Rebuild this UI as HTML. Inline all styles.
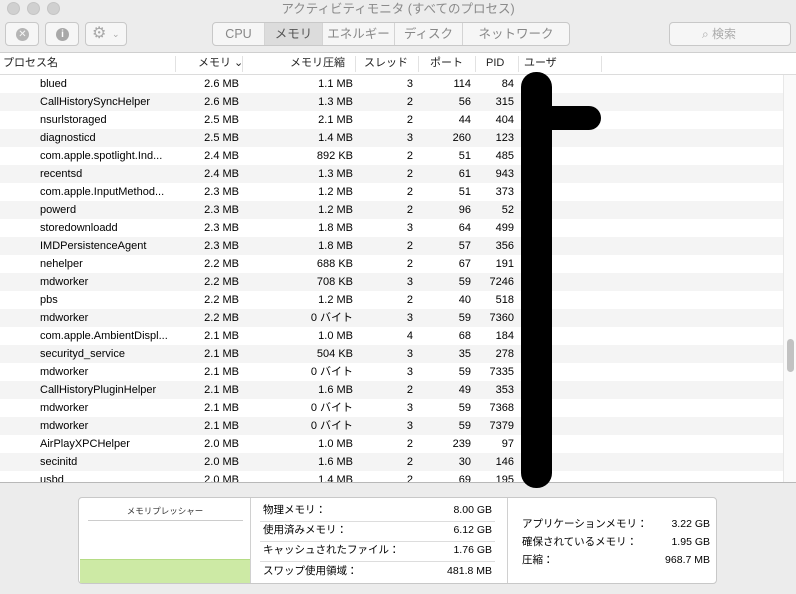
<!DOCTYPE html>
<html><head><meta charset="utf-8"><style>
*{margin:0;padding:0;box-sizing:border-box}
body{width:796px;height:594px;overflow:hidden;background:#ececec;font-family:"Liberation Sans","Noto Sans CJK JP",sans-serif;font-size:11px;color:#000;position:relative}
span,div{line-height:13px}
.abs{position:absolute}
.dot{position:absolute;top:2px;width:13px;height:13px;border-radius:50%;background:#d0d0d0;border:1px solid #c4c4c4}
.btn{position:absolute;top:22px;height:24px;border:1px solid #c8c8c8;border-radius:4px;background:#f6f6f6}
.seg{position:absolute;top:22px;height:24px;left:212px;width:358px;border:1px solid #c8c8c8;border-radius:4px;background:#f6f6f6;display:flex;color:#888;font-size:12.5px}
.seg div{border-right:1px solid #d4d4d4;display:flex;align-items:center;justify-content:center;height:100%}
.seg div:last-child{border:none}
#hdr{position:absolute;top:52px;left:0;width:796px;height:23px;background:#fff;border-top:1px solid #cfcfcf;border-bottom:1px solid #dcdcdc;color:#222}
#hdr span{position:absolute;top:4px}
.vd{position:absolute;top:3px;width:1px;height:16px;background:#e2e2e2}
#rows{position:absolute;top:75px;left:0;width:783px;height:407px;overflow:hidden;background:#fff}
.r{height:18px;position:relative;font-size:11px}
.r:nth-child(even){background:#f4f4f4}
.r span{position:absolute;top:3px;line-height:13px;white-space:nowrap}
.n{left:40px}
.m{right:544px}
.c{right:430px}
.t{right:370px}
.p{right:312px}
.i{right:269px}
#sb{position:absolute;left:783px;top:75px;width:13px;height:407px;background:#fafafa;border-left:1px solid #e8e8e8}
#panel{position:absolute;left:78px;top:497px;width:639px;height:87px;background:#fff;border:1px solid #c8c8c8;border-radius:4px}
.kv{position:absolute;font-size:10.5px;line-height:13px}
</style></head><body>
<div class="dot" style="left:7px"></div><div class="dot" style="left:27px"></div><div class="dot" style="left:47px"></div>
<div class="abs" style="left:0;width:796px;top:3px;text-align:center;color:#8a8a8a;font-size:12.5px">アクティビティモニタ (すべてのプロセス)</div>
<div class="btn" style="left:5px;width:34px"><div class="abs" style="left:10px;top:5px;width:13px;height:13px;border-radius:50%;background:#b5b5b5;color:#f6f6f6;font-size:10px;line-height:13px;text-align:center">✕</div></div>
<div class="btn" style="left:45px;width:34px"><div class="abs" style="left:10px;top:5px;width:13px;height:13px;border-radius:50%;background:#a8a8a8;color:#fff;font-size:10px;font-weight:bold;line-height:13px;text-align:center">i</div></div>
<div class="btn" style="left:85px;width:42px;color:#a8a8a8"><span class="abs" style="left:6px;top:3px;font-size:16px;line-height:16px">⚙</span><span class="abs" style="left:26px;top:5px;font-size:9px">⌄</span></div>
<div class="seg"><div style="width:52px">CPU</div><div style="width:58px;background:#dcdcdc;color:#555">メモリ</div><div style="width:72px">エネルギー</div><div style="width:68px">ディスク</div><div style="flex:1">ネットワーク</div></div>
<div class="btn" style="left:669px;width:122px;color:#aaa;font-size:12px"><span class="abs" style="left:32px;top:5px">⌕ 検索</span></div>
<div id="hdr">
<span style="left:3px">プロセス名</span><div class="vd" style="left:175px"></div>
<span style="left:198px">メモリ ⌄</span><div class="vd" style="left:242px"></div>
<span style="left:290px">メモリ圧縮</span><div class="vd" style="left:355px"></div>
<span style="left:364px">スレッド</span><div class="vd" style="left:418px"></div>
<span style="left:430px">ポート</span><div class="vd" style="left:475px"></div>
<span style="left:486px">PID</span><div class="vd" style="left:518px"></div>
<span style="left:524px">ユーザ</span><div class="vd" style="left:601px"></div>
</div>
<div id="rows">
<div class="r"><span class="n">blued</span><span class="m">2.6 MB</span><span class="c">1.1 MB</span><span class="t">3</span><span class="p">114</span><span class="i">84</span></div>
<div class="r"><span class="n">CallHistorySyncHelper</span><span class="m">2.6 MB</span><span class="c">1.3 MB</span><span class="t">2</span><span class="p">56</span><span class="i">315</span></div>
<div class="r"><span class="n">nsurlstoraged</span><span class="m">2.5 MB</span><span class="c">2.1 MB</span><span class="t">2</span><span class="p">44</span><span class="i">404</span></div>
<div class="r"><span class="n">diagnosticd</span><span class="m">2.5 MB</span><span class="c">1.4 MB</span><span class="t">3</span><span class="p">260</span><span class="i">123</span></div>
<div class="r"><span class="n">com.apple.spotlight.Ind...</span><span class="m">2.4 MB</span><span class="c">892 KB</span><span class="t">2</span><span class="p">51</span><span class="i">485</span></div>
<div class="r"><span class="n">recentsd</span><span class="m">2.4 MB</span><span class="c">1.3 MB</span><span class="t">2</span><span class="p">61</span><span class="i">943</span></div>
<div class="r"><span class="n">com.apple.InputMethod...</span><span class="m">2.3 MB</span><span class="c">1.2 MB</span><span class="t">2</span><span class="p">51</span><span class="i">373</span></div>
<div class="r"><span class="n">powerd</span><span class="m">2.3 MB</span><span class="c">1.2 MB</span><span class="t">2</span><span class="p">96</span><span class="i">52</span></div>
<div class="r"><span class="n">storedownloadd</span><span class="m">2.3 MB</span><span class="c">1.8 MB</span><span class="t">3</span><span class="p">64</span><span class="i">499</span></div>
<div class="r"><span class="n">IMDPersistenceAgent</span><span class="m">2.3 MB</span><span class="c">1.8 MB</span><span class="t">2</span><span class="p">57</span><span class="i">356</span></div>
<div class="r"><span class="n">nehelper</span><span class="m">2.2 MB</span><span class="c">688 KB</span><span class="t">2</span><span class="p">67</span><span class="i">191</span></div>
<div class="r"><span class="n">mdworker</span><span class="m">2.2 MB</span><span class="c">708 KB</span><span class="t">3</span><span class="p">59</span><span class="i">7246</span></div>
<div class="r"><span class="n">pbs</span><span class="m">2.2 MB</span><span class="c">1.2 MB</span><span class="t">2</span><span class="p">40</span><span class="i">518</span></div>
<div class="r"><span class="n">mdworker</span><span class="m">2.2 MB</span><span class="c">0 バイト</span><span class="t">3</span><span class="p">59</span><span class="i">7360</span></div>
<div class="r"><span class="n">com.apple.AmbientDispl...</span><span class="m">2.1 MB</span><span class="c">1.0 MB</span><span class="t">4</span><span class="p">68</span><span class="i">184</span></div>
<div class="r"><span class="n">securityd_service</span><span class="m">2.1 MB</span><span class="c">504 KB</span><span class="t">3</span><span class="p">35</span><span class="i">278</span></div>
<div class="r"><span class="n">mdworker</span><span class="m">2.1 MB</span><span class="c">0 バイト</span><span class="t">3</span><span class="p">59</span><span class="i">7335</span></div>
<div class="r"><span class="n">CallHistoryPluginHelper</span><span class="m">2.1 MB</span><span class="c">1.6 MB</span><span class="t">2</span><span class="p">49</span><span class="i">353</span></div>
<div class="r"><span class="n">mdworker</span><span class="m">2.1 MB</span><span class="c">0 バイト</span><span class="t">3</span><span class="p">59</span><span class="i">7368</span></div>
<div class="r"><span class="n">mdworker</span><span class="m">2.1 MB</span><span class="c">0 バイト</span><span class="t">3</span><span class="p">59</span><span class="i">7379</span></div>
<div class="r"><span class="n">AirPlayXPCHelper</span><span class="m">2.0 MB</span><span class="c">1.0 MB</span><span class="t">2</span><span class="p">239</span><span class="i">97</span></div>
<div class="r"><span class="n">secinitd</span><span class="m">2.0 MB</span><span class="c">1.6 MB</span><span class="t">2</span><span class="p">30</span><span class="i">146</span></div>
<div class="r"><span class="n">usbd</span><span class="m">2.0 MB</span><span class="c">1.4 MB</span><span class="t">2</span><span class="p">69</span><span class="i">195</span></div>
</div>
<div id="sb"><div class="abs" style="left:3px;top:264px;width:7px;height:33px;border-radius:4px;background:#c2c2c2"></div></div>
<div class="abs" style="left:0;top:482px;width:796px;height:1px;background:#b8b8b8"></div>
<div class="abs" style="left:521px;top:72px;width:31px;height:416px;background:#000;border-radius:15px"></div>
<div class="abs" style="left:535px;top:106px;width:66px;height:24px;background:#000;border-radius:12px"></div>
<div id="panel">
<div class="abs" style="left:0;top:0;width:172px;height:85px;border-right:1px solid #d0d0d0"></div>
<div class="abs" style="left:0;top:7px;width:172px;text-align:center;font-size:8.5px;color:#333">メモリプレッシャー</div>
<div class="abs" style="left:9px;top:22px;width:155px;height:1px;background:#ccc"></div>
<div class="abs" style="left:1px;top:61px;width:170px;height:24px;background:#cdeaa5;border-top:1px solid #b5dc85"></div>
<div class="abs" style="left:428px;top:0;width:1px;height:85px;background:#d0d0d0"></div>
<div class="abs" style="left:181px;top:23px;width:235px;height:1px;background:#ddd"></div>
<div class="abs" style="left:181px;top:43px;width:235px;height:1px;background:#ddd"></div>
<div class="abs" style="left:181px;top:63px;width:235px;height:1px;background:#ddd"></div>
<div class="kv" style="left:184px;top:6px">物理メモリ：</div><div class="kv" style="right:224px;top:6px">8.00 GB</div>
<div class="kv" style="left:184px;top:26px">使用済みメモリ：</div><div class="kv" style="right:224px;top:26px">6.12 GB</div>
<div class="kv" style="left:184px;top:46px">キャッシュされたファイル：</div><div class="kv" style="right:224px;top:46px">1.76 GB</div>
<div class="kv" style="left:184px;top:67px">スワップ使用領域：</div><div class="kv" style="right:224px;top:67px">481.8 MB</div>
<div class="kv" style="left:443px;top:20px">アプリケーションメモリ：</div><div class="kv" style="right:6px;top:20px">3.22 GB</div>
<div class="kv" style="left:443px;top:38px">確保されているメモリ：</div><div class="kv" style="right:6px;top:38px">1.95 GB</div>
<div class="kv" style="left:443px;top:56px">圧縮：</div><div class="kv" style="right:6px;top:56px">968.7 MB</div>
</div>
</body></html>
